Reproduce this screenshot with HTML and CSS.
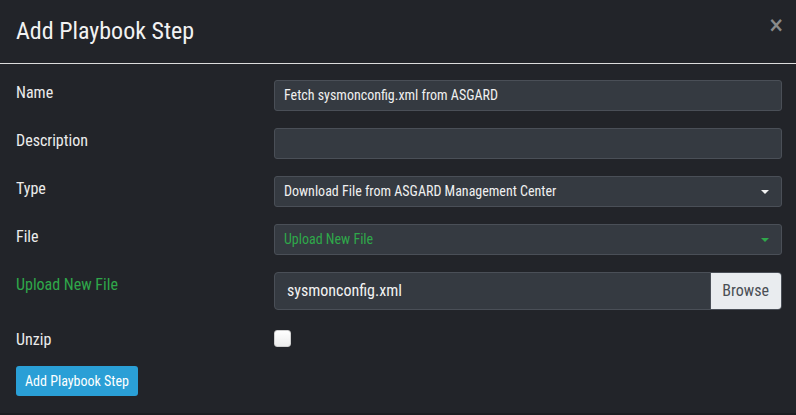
FILE: index.html
```html
<!DOCTYPE html>
<html>
<head>
<meta charset="utf-8">
<link rel="stylesheet" href="styles.css">
</head>
<body>
<div class="modal">
  <div class="modal-header">
    <h4 class="modal-title">Add Playbook Step</h4>
    <span class="close">×</span>
  </div>
  <div class="modal-body">
    <div class="row">
      <label class="lbl">Name</label>
      <div class="control"><div class="input">Fetch sysmonconfig.xml from ASGARD</div></div>
    </div>
    <div class="row">
      <label class="lbl">Description</label>
      <div class="control"><div class="input"></div></div>
    </div>
    <div class="row">
      <label class="lbl">Type</label>
      <div class="control"><div class="input select"><span>Download File from ASGARD Management Center</span><span class="caret"></span></div></div>
    </div>
    <div class="row">
      <label class="lbl">File</label>
      <div class="control"><div class="input select green"><span>Upload New File</span><span class="caret"></span></div></div>
    </div>
    <div class="row">
      <label class="lbl green">Upload New File</label>
      <div class="control"><div class="file"><span class="file-name">sysmonconfig.xml</span><span class="browse">Browse</span></div></div>
    </div>
    <div class="row row-check">
      <label class="lbl">Unzip</label>
      <div class="control"><span class="checkbox"></span></div>
    </div>
    <div class="actions">
      <button class="btn">Add Playbook Step</button>
    </div>
  </div>
</div>
</body>
</html>
```
FILE: styles.css
```css
html, body {
  margin: 0;
  padding: 0;
  background: #1b1d21;
}
body {
  font-family: "Roboto", "Liberation Sans", sans-serif;
  font-stretch: condensed;
  color: #e6e6e6;
}
.modal {
  width: 796px;
  height: 413px;
  background: #222429;
  box-sizing: border-box;
}
.modal-header {
  height: 64px;
  box-sizing: border-box;
  border-bottom: 1px solid #dcdcdc;
  padding: 0 12px 0 16px;
  display: flex;
  align-items: flex-start;
  justify-content: space-between;
}
.modal-title {
  margin: 0;
  font-weight: 400;
  font-size: 24px;
  line-height: 28px;
  padding-top: 17px;
  color: #f2f2f2;
}
.close {
  font-family: "DejaVu Sans", sans-serif;
  font-weight: 700;
  font-size: 21px;
  line-height: 21px;
  color: #8a8a8a;
  padding-top: 15px;
}
.modal-body {
  padding: 16px 14px 0 16px;
  display: flex;
  flex-direction: column;
}
.row {
  display: grid;
  grid-template-columns: 258px 1fr;
  margin-bottom: 17px;
}
.lbl {
  font-size: 16px;
  line-height: 20px;
  padding-top: 3px;
  color: #ececec;
}
.lbl.green {
  color: #2fa84a;
}
.input {
  height: 31px;
  box-sizing: border-box;
  background: #353a41;
  border: 1px solid #4a4f57;
  border-radius: 3px;
  font-size: 14px;
  line-height: 29px;
  padding: 0 9px;
  color: #f0f0f0;
}
.select {
  display: flex;
  justify-content: space-between;
  align-items: center;
}
.select .caret {
  width: 0;
  height: 0;
  border-left: 4px solid transparent;
  border-right: 4px solid transparent;
  border-top: 4px solid #f2f2f2;
  margin-right: 3px;
}
.select.green {
  color: #2fa84a;
}
.select.green .caret {
  border-top-color: #2fa84a;
}
.file {
  height: 38px;
  box-sizing: border-box;
  background: #353a41;
  border: 1px solid #4a4f57;
  border-radius: 4px;
  display: flex;
  align-items: stretch;
  overflow: hidden;
}
.file-name {
  flex: 1;
  font-size: 16px;
  line-height: 36px;
  padding-left: 12px;
  color: #f2f2f2;
}
.browse {
  background: #e9ecef;
  color: #4a4f55;
  font-size: 16px;
  line-height: 36px;
  padding: 0 12px 0 11px;
  border-left: 1px solid #4a4f57;
}
.row-check {
  margin-bottom: 0;
}
.checkbox {
  display: block;
  width: 15px;
  height: 15px;
  margin-top: 3px;
  background: linear-gradient(#ffffff, #ececec);
  border-radius: 3px;
  border: 1px solid #cfcfcf;
}
.actions {
  padding-top: 16px;
}
.btn {
  font-family: inherit;
  font-stretch: condensed;
  background: #2a9fd6;
  color: #ffffff;
  border: none;
  border-radius: 3px;
  font-size: 14px;
  height: 30px;
  padding: 0 9px;
  width: 122px;
}
```
